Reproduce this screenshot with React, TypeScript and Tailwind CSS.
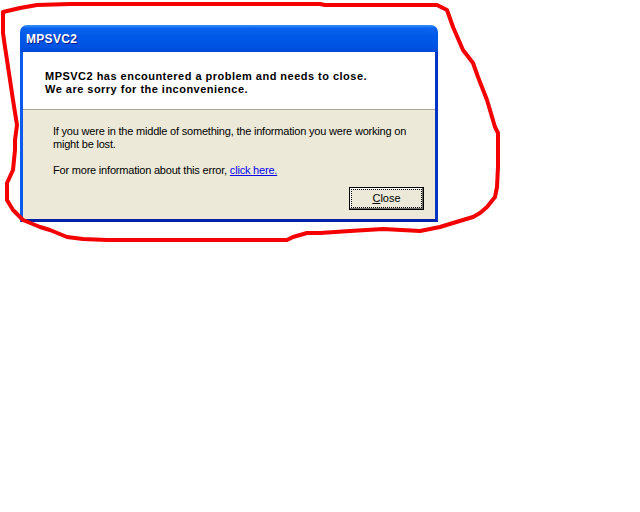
import React from "react";

const Scribble: React.FC = (): React.ReactElement => {
    return (
        <svg className="absolute left-0 top-0 pointer-events-none" width="640" height="260" viewBox="0 0 640 260">
            <path
                d="M 3 12 L 20 8 L 37 5 L 70 4 L 250 4 L 320 4 L 325 5 L 437 5 L 447 10 L 453 27 L 463 50 L 473 63 L 478 77 L 487 100 L 495 127 L 498 133 L 498 167 L 497 187 L 495 197 L 487 207 L 480 213 L 473 217 L 453 223 L 440 227 L 420 231 L 383 229 L 350 231 L 320 233 L 307 233 L 293 237 L 287 240 L 107 240 L 83 239 L 67 237 L 50 230 L 40 227 L 23 220 L 13 210 L 7 200 L 7 183 L 13 170 L 15 150 L 15 140 L 17 125 L 13 100 L 7 60 L 5 47 L 3 33 Z"
                fill="none"
                stroke="#f50000"
                strokeWidth="4"
                strokeLinejoin="round"
                strokeLinecap="round"
            />
        </svg>
    );
}

const App: React.FC = (): React.ReactElement => {
    return (
        <div className="relative w-[640px] h-[512px] bg-white overflow-hidden" style={{ fontFamily: '"Liberation Sans", Arial, sans-serif' }}>
            <div className="pt-[25px] pl-[20px]">
                {/* dialog window */}
                <div className="w-[418px] h-[197px] flex flex-col rounded-t-[7px] overflow-hidden">
                    <div className="h-[27px] shrink-0 flex items-center pl-[6px] bg-[linear-gradient(to_bottom,#3b8ff7_0%,#0a63ee_12%,#0058e6_45%,#0054e3_80%,#0049d4_100%)]">
                        <span className="text-white text-[12px] font-bold tracking-[0.3px] [text-shadow:1px_1px_0_#0a1a8c]">MPSVC2</span>
                    </div>
                    <div className="flex-1 flex flex-col bg-[#ece9d8] border-l-[3px] border-r-[3px] border-b-[3px] border-l-[#0b5aee] border-r-[#0234c4] border-b-[#0022a6]">
                        <div className="h-[58px] bg-white border-b border-[#aca899] pl-[22px] pt-[18px]">
                            <div className="text-[11px] font-bold leading-[13px] text-black tracking-[0.48px]">
                                <p>MPSVC2 has encountered a problem and needs to close.</p>
                                <p>We are sorry for the inconvenience.</p>
                            </div>
                        </div>
                        <div className="flex-1 flex flex-col pl-[30px] pr-[11px] pt-[15px]">
                            <div className="text-[11px] leading-[13px] text-black tracking-[-0.2px]">
                                <p>If you were in the middle of something, the information you were working on</p>
                                <p>might be lost.</p>
                                <p className="mt-[13px]">For more information about this error, <span className="text-[#0000ee] underline">click here.</span></p>
                            </div>
                            <div className="flex justify-end mt-[10px]">
                                <button className="w-[75px] h-[23px] border border-black bg-[#ece9d8] p-[1px] shadow-[inset_-1px_-1px_0_#716f64,inset_1px_1px_0_#ffffff]">
                                    <div className="w-full h-full border border-dotted border-black flex items-center justify-center text-[11px] text-black">
                                        <span><span className="underline">C</span>lose</span>
                                    </div>
                                </button>
                            </div>
                        </div>
                    </div>
                </div>
            </div>
            <Scribble />
        </div>
    );
}

export default App;
